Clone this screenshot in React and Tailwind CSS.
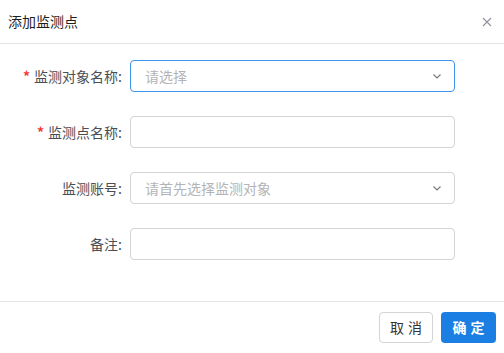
import React from "react";

const font = { fontFamily: '"Noto Sans CJK SC", "Noto Sans", sans-serif' };

function Chevron() {
  return (
    <svg width="10" height="10" viewBox="0 0 10 10" className="absolute right-[12px] top-1/2 -translate-y-1/2">
      <path d="M1.5 3.5 L5 7 L8.5 3.5" fill="none" stroke="#7a7a7a" strokeWidth="1.2" />
    </svg>
  );
}

function Row({ label, required, children }) {
  return (
    <div className="flex items-center h-[32px]">
      <div className="w-[130px] shrink-0 pr-[8px] text-right text-[14px] text-[#4a4f56] leading-none">
        {required && <span className="text-[#ee3b3b] font-bold mr-[4px]">*</span>}
        {label}:
      </div>
      {children}
    </div>
  );
}

export default function App() {
  return (
    <div className="w-[504px] h-[353px] bg-white flex flex-col" style={font}>
      <div className="h-[44px] flex items-center justify-between pl-[8px] pr-[12px] border-b border-[#e4e4e4] shrink-0">
        <span className="text-[14px] text-[#1f1f1f]">添加监测点</span>
        <svg width="10" height="10" viewBox="0 0 10 10">
          <path d="M1 1 L9 9 M9 1 L1 9" stroke="#909399" strokeWidth="1.1" />
        </svg>
      </div>
      <div className="flex-1 flex flex-col gap-[24px] pt-[16px]">
        <Row label="监测对象名称" required>
          <div className="relative w-[325px] h-[32px] border border-[#3d95ec] rounded-[4px] flex items-center px-[14px] text-[14px] text-[#b4b4b4]">
            请选择
            <Chevron />
          </div>
        </Row>
        <Row label="监测点名称" required>
          <div className="w-[325px] h-[32px] border border-[#d4d4d4] rounded-[4px]" />
        </Row>
        <Row label="监测账号">
          <div className="relative w-[325px] h-[32px] border border-[#d4d4d4] rounded-[4px] flex items-center px-[14px] text-[14px] text-[#b4b4b4]">
            请首先选择监测对象
            <Chevron />
          </div>
        </Row>
        <Row label="备注">
          <div className="w-[325px] h-[32px] border border-[#d4d4d4] rounded-[4px]" />
        </Row>
      </div>
      <div className="h-[52px] border-t border-[#e4e4e4] flex items-center justify-end gap-[8px] pr-[8px] shrink-0">
        <button className="w-[54px] h-[31px] border border-[#d4d4d4] rounded-[4px] bg-white text-[14px] text-[#333] tracking-[4px] pl-[4px]">取消</button>
        <button className="w-[55px] h-[31px] rounded-[4px] bg-[#1a7ee3] text-[14px] text-white font-bold tracking-[4px] pl-[4px]">确定</button>
      </div>
    </div>
  );
}
